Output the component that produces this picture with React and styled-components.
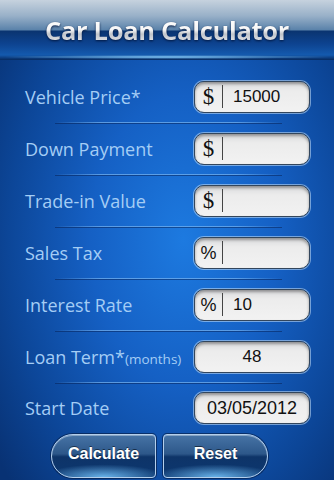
import React from "react";
import styled, { createGlobalStyle } from "styled-components";

const Global = createGlobalStyle`
  html, body { margin: 0; padding: 0; }
  body {
    width: 334px;
    height: 480px;
    overflow: hidden;
    background: #0a3575;
  }
`;

const Screen = styled.div`
  width: 334px;
  height: 480px;
  display: flex;
  flex-direction: column;
  overflow: hidden;
  background:
    radial-gradient(ellipse 70% 75% at 55% 50%, #1d7ae0 0%, #1560c4 40%, #0c4698 75%, #083274 100%);
`;

const Header = styled.header`
  height: 60px;
  flex: none;
  display: flex;
  align-items: center;
  justify-content: center;
  background:
    radial-gradient(ellipse 50% 2px at 50% 57px, rgba(140, 210, 255, 0.95), rgba(140, 210, 255, 0) 100%),
    linear-gradient(
      to bottom,
      #c6d2de 0px,
      #98b0c8 16px,
      #5a82aa 30px,
      #0a3470 31px,
      #0d4390 44px,
      #145aae 55px,
      #0c3c7e 58px,
      #072a5e 60px
    );
`;

const Title = styled.h1`
  margin: 0;
  font-family: "Open Sans", "Liberation Sans", sans-serif;
  font-weight: 700;
  font-size: 25.5px;
  letter-spacing: -0.3px;
  line-height: 1;
  background: linear-gradient(to bottom, #ffffff 0%, #f6f6f6 45%, #c0c4ca 62%, #eceef2 100%);
  -webkit-background-clip: text;
  background-clip: text;
  color: transparent;
  filter: drop-shadow(0 1px 1px rgba(0, 20, 60, 0.9));
  transform: translateY(1px);
`;

const Form = styled.main`
  display: flex;
  flex-direction: column;
  padding-top: 11px;
`;

const Row = styled.div`
  height: ${(p) => p.$h || 51}px;
  display: flex;
  align-items: center;
  justify-content: space-between;
  padding: 0 24px 0 25px;
`;

const Divider = styled.div`
  height: 1px;
  margin: 0 52px 0 55px;
  background: linear-gradient(
    to right,
    rgba(120, 180, 240, 0),
    rgba(120, 180, 240, 0.7) 20%,
    rgba(120, 180, 240, 0.7) 80%,
    rgba(120, 180, 240, 0)
  );
  box-shadow: 0 1px 0 rgba(5, 30, 80, 0.5);
`;

const Label = styled.span`
  font-family: "Open Sans", "Noto Sans", sans-serif;
  font-size: 18px;
  color: #a4cdf5;
  white-space: nowrap;
`;

const Small = styled.span`
  font-size: 13.5px;
`;

const Field = styled.div`
  width: 116px;
  height: 32px;
  box-sizing: border-box;
  display: flex;
  align-items: center;
  justify-content: ${(p) => (p.$center ? "center" : "flex-start")};
  border-radius: 10px;
  border: 1px solid #33465c;
  background: linear-gradient(to bottom, #d9dadc 0%, #ececec 30%, #f2f2f2 100%);
  box-shadow:
    inset 0 2px 3px rgba(0, 0, 0, 0.35),
    0 0 0 1px rgba(200, 225, 250, 0.55);
`;

const Prefix = styled.span`
  width: 27px;
  flex: none;
  text-align: center;
  font-family: ${(p) => (p.$serif ? '"Liberation Serif", serif' : '"Liberation Sans", sans-serif')};
  font-size: ${(p) => (p.$serif ? 23 : 18)}px;
  color: #111;
  line-height: 1;
`;

const Caret = styled.span`
  width: 1px;
  height: 23px;
  flex: none;
  background: #444;
`;

const Value = styled.span`
  padding-left: ${(p) => (p.$center ? 0 : 10)}px;
  font-family: "Liberation Sans", sans-serif;
  font-size: ${(p) => p.$size || 17}px;
  color: #111;
  line-height: 1;
`;

const Buttons = styled.div`
  display: flex;
  justify-content: flex-start;
  gap: 7px;
  padding-left: 51px;
  padding-top: 2px;
`;

const Btn = styled.button`
  width: 105px;
  height: 44px;
  border: 1.5px solid #b4cfec;
  border-radius: ${(p) => (p.$side === "left" ? "22px 4px 4px 22px" : "4px 22px 22px 4px")};
  background:
    radial-gradient(ellipse 60% 30% at 50% 100%, rgba(120, 200, 255, 0.85), rgba(120, 200, 255, 0) 100%),
    linear-gradient(to bottom, #4774a6 0%, #2d5789 45%, #0e3468 52%, #0c3770 100%);
  box-shadow: 0 0 0 1px rgba(5, 25, 60, 0.6), inset 0 1px 0 rgba(255, 255, 255, 0.35);
  color: #fff;
  font-family: "Liberation Sans", Arial, sans-serif;
  font-weight: 700;
  font-size: 16px;
  text-shadow: 0 -1px 0 rgba(0, 0, 0, 0.5);
  padding: 0;
  padding-bottom: 4px;
  cursor: pointer;
`;

const rows = [
  { label: "Vehicle Price*", prefix: "$", serif: true, value: "15000" },
  { label: "Down Payment", prefix: "$", serif: true, value: "" },
  { label: "Trade-in Value", prefix: "$", serif: true, value: "" },
  { label: "Sales Tax", prefix: "%", value: "" },
  { label: "Interest Rate", prefix: "%", value: "10" },
];

export default function App() {
  return (
    <>
      <Global />
      <Screen>
        <Header>
          <Title>Car Loan Calculator</Title>
        </Header>
        <Form>
          {rows.map((r) => (
            <React.Fragment key={r.label}>
              <Row>
                <Label>{r.label}</Label>
                <Field>
                  <Prefix $serif={r.serif}>{r.prefix}</Prefix>
                  <Caret />
                  <Value>{r.value}</Value>
                </Field>
              </Row>
              <Divider />
            </React.Fragment>
          ))}
          <Row>
            <Label>
              Loan Term*<Small>(months)</Small>
            </Label>
            <Field $center>
              <Value $center>48</Value>
            </Field>
          </Row>
          <Divider />
          <Row $h={49}>
            <Label>Start Date</Label>
            <Field $center>
              <Value $center $size={18}>03/05/2012</Value>
            </Field>
          </Row>
          <Buttons>
            <Btn $side="left">Calculate</Btn>
            <Btn $side="right">Reset</Btn>
          </Buttons>
        </Form>
      </Screen>
    </>
  );
}
